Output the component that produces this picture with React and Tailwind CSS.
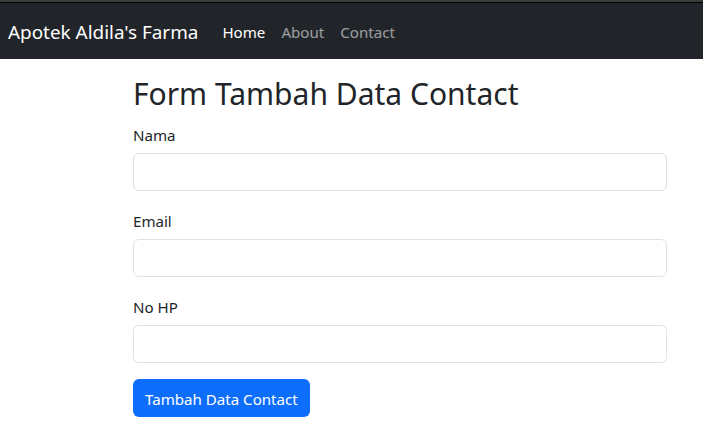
export default function App() {
  const fields = ["Nama", "Email", "No HP"];

  return (
    <div className="min-h-screen bg-white text-[#212529]" style={{ fontFamily: '"Noto Sans", sans-serif' }}>
      <div className="h-[2px] bg-[#3b3b3b]"></div>
      <div className="h-px bg-black"></div>
      <nav className="h-[56px] bg-[#212529] flex items-center pl-2 pt-[3px]">
        <span className="text-[18.9px] text-white mr-4 leading-none">Apotek Aldila's Farma</span>
        <div className="flex items-center text-[15.1px] leading-none">
          <a className="px-2 text-white">Home</a>
          <a className="px-2 text-white/55">About</a>
          <a className="px-2 text-white/55">Contact</a>
        </div>
      </nav>

      <div className="ml-[133px] w-[534px] pt-[16px]">
        <h1 className="text-[30px] leading-[38px] mb-2 font-normal">Form Tambah Data Contact</h1>
        <form onSubmit={e => e.preventDefault()}>
          {fields.map(f => (
            <div key={f} className="mb-4">
              <label className="block text-[15.1px] leading-6 pt-[2px] mb-[6px]">{f}</label>
              <input
                type="text"
                className="block w-full h-[38px] px-3 rounded-[6px] border border-[#dee2e6] bg-white outline-none"
              />
            </div>
          ))}
          <button className="h-[38px] px-3 pt-[2px] rounded-[6px] bg-[#0d6efd] text-white text-[15.1px]">
            Tambah Data Contact
          </button>
        </form>
      </div>
    </div>
  );
}
